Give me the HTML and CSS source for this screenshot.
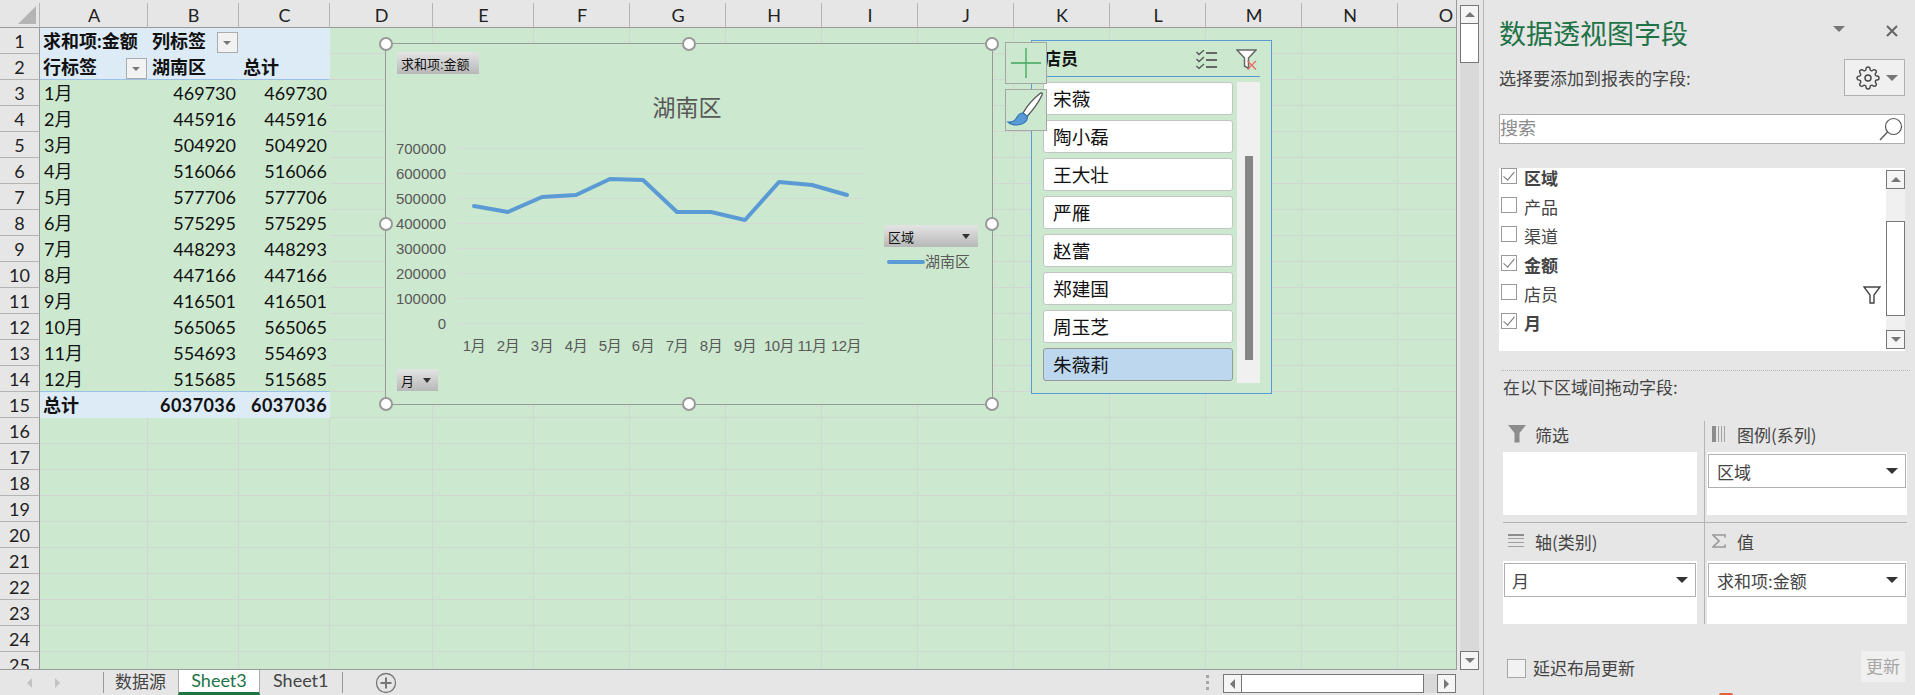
FILE: index.html
```html
<!DOCTYPE html>
<html>
<head>
    <title>数据透视图字段</title>
    <link rel="stylesheet" href="styles.css">
</head>
<body>
<div class="app">
    <div class="workbook">
        <div class="sheet-row">
            <div class="grid-wrap">
                <table class="grid">
                    <colgroup>
                        <col class="c-head"><col class="c-a"><col class="c-b"><col class="c-b">
                        <col class="c-d"><col class="c-e"><col class="c-n"><col class="c-n"><col class="c-n"><col class="c-n"><col class="c-n"><col class="c-n"><col class="c-n"><col class="c-n"><col class="c-n"><col class="c-n">
                    </colgroup>
                    <thead>
                        <tr>
                            <th class="corner"><span class="corner-tri"></span></th>
                            <th>A</th><th>B</th><th>C</th><th>D</th><th>E</th><th>F</th><th>G</th><th>H</th><th>I</th><th>J</th><th>K</th><th>L</th><th>M</th><th>N</th><th>O</th>
                        </tr>
                    </thead>
                    <tbody>
                        <tr class="pv-head"><th>1</th><td class="b">求和项:金额</td><td class="b flt">列标签<span class="dd"></span></td><td></td><td></td><td></td><td></td><td></td><td></td><td></td><td></td><td></td><td></td><td></td><td></td><td></td></tr>
                        <tr class="pv-head pv-last"><th>2</th><td class="b flt">行标签<span class="dd"></span></td><td class="b">湖南区</td><td class="b">总计</td><td></td><td></td><td></td><td></td><td></td><td></td><td></td><td></td><td></td><td></td><td></td><td></td></tr>
                        <tr class="pv"><th>3</th><td>1月</td><td class="r">469730</td><td class="r">469730</td><td></td><td></td><td></td><td></td><td></td><td></td><td></td><td></td><td></td><td></td><td></td><td></td></tr>
                        <tr class="pv"><th>4</th><td>2月</td><td class="r">445916</td><td class="r">445916</td><td></td><td></td><td></td><td></td><td></td><td></td><td></td><td></td><td></td><td></td><td></td><td></td></tr>
                        <tr class="pv"><th>5</th><td>3月</td><td class="r">504920</td><td class="r">504920</td><td></td><td></td><td></td><td></td><td></td><td></td><td></td><td></td><td></td><td></td><td></td><td></td></tr>
                        <tr class="pv"><th>6</th><td>4月</td><td class="r">516066</td><td class="r">516066</td><td></td><td></td><td></td><td></td><td></td><td></td><td></td><td></td><td></td><td></td><td></td><td></td></tr>
                        <tr class="pv"><th>7</th><td>5月</td><td class="r">577706</td><td class="r">577706</td><td></td><td></td><td></td><td></td><td></td><td></td><td></td><td></td><td></td><td></td><td></td><td></td></tr>
                        <tr class="pv"><th>8</th><td>6月</td><td class="r">575295</td><td class="r">575295</td><td></td><td></td><td></td><td></td><td></td><td></td><td></td><td></td><td></td><td></td><td></td><td></td></tr>
                        <tr class="pv"><th>9</th><td>7月</td><td class="r">448293</td><td class="r">448293</td><td></td><td></td><td></td><td></td><td></td><td></td><td></td><td></td><td></td><td></td><td></td><td></td></tr>
                        <tr class="pv"><th>10</th><td>8月</td><td class="r">447166</td><td class="r">447166</td><td></td><td></td><td></td><td></td><td></td><td></td><td></td><td></td><td></td><td></td><td></td><td></td></tr>
                        <tr class="pv"><th>11</th><td>9月</td><td class="r">416501</td><td class="r">416501</td><td></td><td></td><td></td><td></td><td></td><td></td><td></td><td></td><td></td><td></td><td></td><td></td></tr>
                        <tr class="pv"><th>12</th><td>10月</td><td class="r">565065</td><td class="r">565065</td><td></td><td></td><td></td><td></td><td></td><td></td><td></td><td></td><td></td><td></td><td></td><td></td></tr>
                        <tr class="pv"><th>13</th><td>11月</td><td class="r">554693</td><td class="r">554693</td><td></td><td></td><td></td><td></td><td></td><td></td><td></td><td></td><td></td><td></td><td></td><td></td></tr>
                        <tr class="pv pv-last"><th>14</th><td>12月</td><td class="r">515685</td><td class="r">515685</td><td></td><td></td><td></td><td></td><td></td><td></td><td></td><td></td><td></td><td></td><td></td><td></td></tr>
                        <tr class="pv-head"><th>15</th><td class="b">总计</td><td class="b r wide">6037036</td><td class="b r wide">6037036</td><td></td><td></td><td></td><td></td><td></td><td></td><td></td><td></td><td></td><td></td><td></td><td></td></tr>
                        <tr><th>16</th><td></td><td></td><td></td><td></td><td></td><td></td><td></td><td></td><td></td><td></td><td></td><td></td><td></td><td></td><td></td></tr>
                        <tr><th>17</th><td></td><td></td><td></td><td></td><td></td><td></td><td></td><td></td><td></td><td></td><td></td><td></td><td></td><td></td><td></td></tr>
                        <tr><th>18</th><td></td><td></td><td></td><td></td><td></td><td></td><td></td><td></td><td></td><td></td><td></td><td></td><td></td><td></td><td></td></tr>
                        <tr><th>19</th><td></td><td></td><td></td><td></td><td></td><td></td><td></td><td></td><td></td><td></td><td></td><td></td><td></td><td></td><td></td></tr>
                        <tr><th>20</th><td></td><td></td><td></td><td></td><td></td><td></td><td></td><td></td><td></td><td></td><td></td><td></td><td></td><td></td><td></td></tr>
                        <tr><th>21</th><td></td><td></td><td></td><td></td><td></td><td></td><td></td><td></td><td></td><td></td><td></td><td></td><td></td><td></td><td></td></tr>
                        <tr><th>22</th><td></td><td></td><td></td><td></td><td></td><td></td><td></td><td></td><td></td><td></td><td></td><td></td><td></td><td></td><td></td></tr>
                        <tr><th>23</th><td></td><td></td><td></td><td></td><td></td><td></td><td></td><td></td><td></td><td></td><td></td><td></td><td></td><td></td><td></td></tr>
                        <tr><th>24</th><td></td><td></td><td></td><td></td><td></td><td></td><td></td><td></td><td></td><td></td><td></td><td></td><td></td><td></td><td></td></tr>
                        <tr><th>25</th><td></td><td></td><td></td><td></td><td></td><td></td><td></td><td></td><td></td><td></td><td></td><td></td><td></td><td></td><td></td></tr>
                    </tbody>
                </table>

                <div class="chart">
                    <svg class="chart-svg" width="606" height="360" viewBox="386 44 606 360">
                        <g class="gridlines">
                            <line x1="458" x2="865" y1="148.5" y2="148.5"/>
                            <line x1="458" x2="865" y1="173.5" y2="173.5"/>
                            <line x1="458" x2="865" y1="198.5" y2="198.5"/>
                            <line x1="458" x2="865" y1="223.5" y2="223.5"/>
                            <line x1="458" x2="865" y1="248.5" y2="248.5"/>
                            <line x1="458" x2="865" y1="273.5" y2="273.5"/>
                            <line x1="458" x2="865" y1="298.5" y2="298.5"/>
                            <line x1="458" x2="865" y1="323.5" y2="323.5"/>
                        </g>
                        <polyline class="series" points="474,206 508,212 542,197 576,195 610,179 643,180 677,212 711,212 745,220 779,182 812,185 847,195"/>
                        <text class="chart-title" x="687" y="116">湖南区</text>
                        <g class="y-labels">
                            <text x="446" y="154">700000</text>
                            <text x="446" y="179">600000</text>
                            <text x="446" y="204">500000</text>
                            <text x="446" y="229">400000</text>
                            <text x="446" y="254">300000</text>
                            <text x="446" y="279">200000</text>
                            <text x="446" y="304">100000</text>
                            <text x="446" y="329">0</text>
                        </g>
                        <g class="x-labels">
                            <text x="474" y="351">1月</text>
                            <text x="508" y="351">2月</text>
                            <text x="542" y="351">3月</text>
                            <text x="576" y="351">4月</text>
                            <text x="610" y="351">5月</text>
                            <text x="643" y="351">6月</text>
                            <text x="677" y="351">7月</text>
                            <text x="711" y="351">8月</text>
                            <text x="745" y="351">9月</text>
                            <text x="779" y="351">10月</text>
                            <text x="812" y="351">11月</text>
                            <text x="846" y="351">12月</text>
                        </g>
                        <line class="series" x1="889" x2="923" y1="262" y2="262"/>
                        <text class="legend-text" x="925" y="267">湖南区</text>
                    </svg>
                    <div class="chart-btn btn-value">求和项:金额</div>
                    <div class="chart-btn btn-legend">区域<span class="tri"></span></div>
                    <div class="chart-btn btn-axis">月<span class="tri"></span></div>
                    <span class="handle h-tl"></span><span class="handle h-tc"></span><span class="handle h-tr"></span>
                    <span class="handle h-ml"></span><span class="handle h-mr"></span>
                    <span class="handle h-bl"></span><span class="handle h-bc"></span><span class="handle h-br"></span>
                </div>

                <div class="slicer">
                    <div class="slicer-head">
                        <span class="slicer-title">店员</span>
                        <svg class="slicer-ico" width="21" height="19" viewBox="0 0 21 19">
                            <path d="M.5 2l2.500 2.500L8 0M.5 9l2.500 2.500L8 7M.5 16l2.500 2.500L8 14" fill="none" stroke="#555" stroke-width="1.300"/>
                            <path d="M10 3h11M10 10h11M10 17h11" stroke="#666" stroke-width="2"/>
                        </svg>
                        <svg class="slicer-clear" width="21" height="21" viewBox="0 0 21 21">
                            <path d="M1 1h19l-7.500 8v10.500l-4-2.500V9z" fill="#fff" stroke="#666" stroke-width="1.500"/>
                            <path d="M11.500 12l8.500 8.500M20 12l-8.500 8.500" stroke="#ee6a64" stroke-width="1.300"/>
                        </svg>
                    </div>
                    <div class="slicer-body">
                        <ul class="slicer-list">
                            <li>宋薇</li>
                            <li>陶小磊</li>
                            <li>王大壮</li>
                            <li>严雁</li>
                            <li>赵蕾</li>
                            <li>郑建国</li>
                            <li>周玉芝</li>
                            <li class="selected">朱薇莉</li>
                        </ul>
                        <div class="slicer-scroll"><span class="slicer-thumb"></span></div>
                    </div>
                </div>

                <div class="side-btn btn-plus">
                    <svg width="32" height="32" viewBox="0 0 32 32"><path d="M16 1v30M1 16h30" stroke="#3fa75c" stroke-width="1.300"/></svg>
                </div>
                <div class="side-btn btn-brush">
                    <svg width="40" height="40" viewBox="0 0 40 40">
                        <path d="M36 5c1-2-.5-2.500-2-1.500C27 9 21 16 17 23l4 3.500C27 20 32.500 12.500 36 5z" fill="#fff" stroke="#555" stroke-width="1.300"/>
                        <path d="M17 23l4.500 3.500c0 5-4.500 8.500-10.500 8.500-3.500 0-7-1-9-3 4 .5 6.500-1 8.500-4 1.500-3 3.500-5 6.500-5z" fill="#5b9bd5" stroke="#2e75b6" stroke-width="1.100"/>
                    </svg>
                </div>
            </div>

            <div class="vscroll">
                <span class="sb-btn"><span class="up"></span></span>
                <span class="vthumb"></span>
                <span class="sb-btn sb-end"><span class="down"></span></span>
            </div>
        </div>

        <div class="tabbar">
            <span class="nav-arrow left"></span>
            <span class="nav-arrow right"></span>
            <span class="tab-sep"></span>
            <span class="tab tab-cjk">数据源</span>
            <span class="tab active">Sheet3</span>
            <span class="tab">Sheet1</span>
            <span class="tab-sep last"></span>
            <span class="add-sheet">
                <svg width="22" height="22" viewBox="0 0 22 22"><circle cx="11" cy="11" r="9.500" fill="none" stroke="#777" stroke-width="1.300"/><path d="M11 5.500v11M5.500 11h11" stroke="#777" stroke-width="2"/></svg>
            </span>
            <span class="dots"><i></i><i></i><i></i></span>
            <div class="hscroll">
                <span class="sb-btn"><span class="lt"></span></span>
                <span class="hthumb"></span>
                <span class="sb-btn sb-end"><span class="rt"></span></span>
            </div>
        </div>
    </div>

    <aside class="panel">
        <div class="panel-head">
            <span class="panel-title">数据透视图字段</span>
            <span class="head-arrow"></span>
            <svg class="head-close" width="14" height="14" viewBox="0 0 14 14"><path d="M2 2l10 10M12 2L2 12" stroke="#666" stroke-width="2"/></svg>
        </div>
        <div class="pick-row">
            <span>选择要添加到报表的字段:</span>
            <div class="gear-btn">
                <svg width="24" height="24" viewBox="0 0 24 24">
                    <circle cx="12" cy="12" r="3" fill="none" stroke="#444" stroke-width="1.400"/>
                    <path d="M19.400 15a1.650 1.650 0 0 0 .33 1.820l.06.06a2 2 0 0 1 0 2.830 2 2 0 0 1-2.830 0l-.06-.06a1.650 1.650 0 0 0-1.820-.33 1.650 1.650 0 0 0-1 1.510V21a2 2 0 0 1-2 2 2 2 0 0 1-2-2v-.09A1.650 1.650 0 0 0 9 19.400a1.650 1.650 0 0 0-1.820.33l-.06.06a2 2 0 0 1-2.830 0 2 2 0 0 1 0-2.830l.06-.06a1.650 1.650 0 0 0 .33-1.820 1.650 1.650 0 0 0-1.510-1H3a2 2 0 0 1-2-2 2 2 0 0 1 2-2h.09A1.650 1.650 0 0 0 4.600 9a1.650 1.650 0 0 0-.33-1.820l-.06-.06a2 2 0 0 1 0-2.830 2 2 0 0 1 2.830 0l.06.06a1.650 1.650 0 0 0 1.820.33H9a1.650 1.650 0 0 0 1-1.510V3a2 2 0 0 1 2-2 2 2 0 0 1 2 2v.09a1.650 1.650 0 0 0 1 1.510 1.650 1.650 0 0 0 1.820-.33l.06-.06a2 2 0 0 1 2.830 0 2 2 0 0 1 0 2.830l-.06.06a1.650 1.650 0 0 0-.33 1.820V9a1.650 1.650 0 0 0 1.510 1H21a2 2 0 0 1 2 2 2 2 0 0 1-2 2h-.09a1.650 1.650 0 0 0-1.510 1z" fill="none" stroke="#444" stroke-width="1.400"/>
                </svg>
                <span class="head-arrow small"></span>
            </div>
        </div>
        <div class="search">
            <span class="search-text">搜索</span>
            <svg width="24" height="24" viewBox="0 0 24 24"><circle cx="14.500" cy="9.500" r="8" fill="none" stroke="#555" stroke-width="1.200"/><path d="M8.500 15L1 23" stroke="#555" stroke-width="1.300"/></svg>
        </div>
        <div class="field-list">
            <ul>
                <li class="on"><span class="check is-on"></span><span class="fname">区域</span></li>
                <li><span class="check"></span><span class="fname">产品</span></li>
                <li><span class="check"></span><span class="fname">渠道</span></li>
                <li class="on"><span class="check is-on"></span><span class="fname">金额</span></li>
                <li><span class="check"></span><span class="fname">店员</span>
                    <svg class="field-filter" width="18" height="18" viewBox="0 0 18 18"><path d="M1 1h16l-6 8v8H7V9z" fill="#fff" stroke="#444" stroke-width="1.400"/></svg>
                </li>
                <li class="on"><span class="check is-on"></span><span class="fname">月</span></li>
            </ul>
            <div class="list-scroll">
                <span class="sb-btn"><span class="up"></span></span>
                <span class="list-thumb"></span>
                <span class="sb-btn sb-end"><span class="down"></span></span>
            </div>
        </div>
        <div class="dotted"></div>
        <div class="drag-label">在以下区域间拖动字段:</div>
        <div class="areas">
            <div class="area a-tl">
                <div class="area-head">
                    <span class="ico-slot"><svg width="18" height="18" viewBox="0 0 18 18"><path d="M0 0h18l-6.500 8v9.500h-5V8z" fill="#8c8c8c"/></svg></span>
                    <span>筛选</span>
                </div>
                <div class="area-box"></div>
            </div>
            <div class="area a-tr">
                <div class="area-head">
                    <span class="ico-slot"><svg width="14" height="16" viewBox="0 0 14 16"><path d="M0 0h4v16H0z" fill="#8c8c8c"/><path d="M6 0h1v16H6zM9 0h1v16H9zM12 0h1v16h-1z" fill="#a0a0a0"/></svg></span>
                    <span>图例(系列)</span>
                </div>
                <div class="area-box"><div class="pill">区域<span class="tri big"></span></div></div>
            </div>
            <div class="area a-bl">
                <div class="area-head">
                    <span class="ico-slot"><svg width="16" height="14" viewBox="0 0 16 14"><path d="M0 0h16v2H0z" fill="#8c8c8c"/><path d="M0 4h16v1H0zM0 8h16v1H0zM0 12h16v1H0z" fill="#a0a0a0"/></svg></span>
                    <span>轴(类别)</span>
                </div>
                <div class="area-box"><div class="pill">月<span class="tri big"></span></div></div>
            </div>
            <div class="area a-br">
                <div class="area-head">
                    <span class="ico-slot"><svg width="14" height="14" viewBox="0 0 14 14"><path d="M13 3.500V1H1l6 6-6 6h12v-2.500" fill="none" stroke="#999" stroke-width="1.600"/></svg></span>
                    <span>值</span>
                </div>
                <div class="area-box"><div class="pill">求和项:金额<span class="tri big"></span></div></div>
            </div>
        </div>
        <div class="panel-foot">
            <span class="defer-box"></span>
            <span class="defer-text">延迟布局更新</span>
            <span class="update-btn">更新</span>
        </div>
        <span class="cursor-bit"></span>
    </aside>
</div>
</body>
</html>
```

FILE: styles.css
```css
* {
    box-sizing: border-box;
}

html, body {
    margin: 0;
    height: 100%;
    overflow: hidden;
}

body {
    background-color: #e6e6e6;
    font-family: "Lato", "Noto Sans CJK SC", sans-serif;
    color: #111111;
}

ul {
    list-style-type: none;
    margin: 0;
    padding: 0;
}

.app {
    display: flex;
    width: 1915px;
    height: 695px;
}

.workbook {
    width: 1483px;
    flex: none;
}

.sheet-row {
    display: flex;
    height: 670px;
}

/* grid */
.grid-wrap {
    position: relative;
    width: 1457px;
    height: 670px;
    padding-top: 3px;
    overflow: hidden;
    border-right: 1px solid #9a9a9a;
    border-bottom: 1px solid #9a9a9a;
}

.grid {
    border-collapse: separate;
    border-spacing: 0;
    table-layout: fixed;
    width: 1494px;
    font-size: 18px;
}

.c-head { width: 40px; }
.c-a { width: 108px; }
.c-b { width: 91px; }
.c-d { width: 103px; }
.c-e { width: 101px; }
.c-n { width: 96px; }

.grid th {
    padding: 0;
    font-weight: 400;
    text-align: center;
    background-color: #e6e6e6;
    color: #222222;
}

.grid thead th {
    height: 25px;
    line-height: 24px;
    padding-left: 1px;
    border-right: 1px solid #b4b4b4;
    border-bottom: 1px solid #9a9a9a;
}

.grid tbody th {
    height: 26px;
    padding-top: 2px;
    line-height: 23px;
    border-right: 1px solid #9a9a9a;
    border-bottom: 1px solid #b4b4b4;
}

.grid td {
    height: 26px;
    line-height: 23px;
    padding: 2px 2px 0 4px;
    overflow: hidden;
    white-space: nowrap;
    background-color: #cce8cf;
    border-right: 1px solid #d2d6d2;
    border-bottom: 1px solid #d2d6d2;
}

.grid td.b { font-weight: 700; padding-left: 3px; }
.grid td.b + td.b { padding-left: 4px; }
.grid td.r { text-align: right; }
.grid td.flt { padding-right: 0; }
.grid td.wide { letter-spacing: 0.4px; }

.corner {
    position: relative;
}

.corner-tri {
    position: absolute;
    right: 3px;
    bottom: 3px;
    width: 0;
    height: 0;
    border-left: 18px solid transparent;
    border-bottom: 18px solid #b4b4b4;
}

.pv td:nth-child(2), .pv td:nth-child(3), .pv td:nth-child(4) {
    border-color: #cce8cf;
}

.pv-head td:nth-child(2), .pv-head td:nth-child(3), .pv-head td:nth-child(4) {
    background-color: #ddebf7;
    border-color: #ddebf7;
}

.pv-last td:nth-child(2), .pv-last td:nth-child(3), .pv-last td:nth-child(4) {
    border-bottom-color: #9bc2e6;
}

.dd {
    float: right;
    position: relative;
    width: 21px;
    height: 21px;
    margin-top: 2px;
    background-color: #f2f2f2;
    border: 1px solid #ababab;
}

.dd::after {
    content: "";
    position: absolute;
    left: 5px;
    top: 8px;
    border-left: 4px solid transparent;
    border-right: 4px solid transparent;
    border-top: 4px solid #777777;
}

/* chart */
.chart {
    position: absolute;
    left: 385px;
    top: 43px;
    width: 608px;
    height: 362px;
    background-color: #cce8cf;
    border: 1px solid #999999;
}

.chart-svg {
    display: block;
    font-family: "Liberation Sans", "Noto Sans CJK SC", sans-serif;
}

.gridlines line {
    stroke: #d6d9d6;
    stroke-width: 1;
}

.series {
    fill: none;
    stroke: #5b9bd5;
    stroke-width: 4;
    stroke-linecap: round;
    stroke-linejoin: round;
}

.chart-title {
    font-size: 23px;
    fill: #595959;
    text-anchor: middle;
}

.y-labels text {
    font-size: 15px;
    fill: #595959;
    text-anchor: end;
}

.x-labels text {
    font-size: 15px;
    fill: #595959;
    text-anchor: middle;
    letter-spacing: -0.5px;
}

.legend-text {
    font-size: 15px;
    fill: #595959;
}

.chart-btn {
    position: absolute;
    display: flex;
    align-items: center;
    justify-content: space-between;
    height: 22px;
    padding: 0 4px;
    font-family: "Liberation Sans", "Noto Sans CJK SC", sans-serif;
    font-size: 13px;
    color: #111111;
    background: linear-gradient(#e4e4e4, #b8b8b8);
}

.btn-value { left: 11px; top: 8px; width: 82px; }
.btn-legend { left: 498px; top: 181px; width: 94px; }
.btn-axis { left: 11px; top: 325px; width: 41px; }

.tri {
    width: 0;
    height: 0;
    margin-right: 4px;
    border-left: 4px solid transparent;
    border-right: 4px solid transparent;
    border-top: 5px solid #333333;
}

.tri.big {
    margin-right: 7px;
    border-left-width: 6px;
    border-right-width: 6px;
    border-top-width: 6px;
}

.btn-axis .tri {
    margin-right: 3px;
}

.handle {
    position: absolute;
    width: 14px;
    height: 14px;
    background-color: #ffffff;
    border: 2px solid #999999;
    border-radius: 50%;
}

.h-tl { left: -7px; top: -7px; }
.h-tc { left: 296px; top: -7px; }
.h-tr { right: -7px; top: -7px; }
.h-ml { left: -7px; top: 173px; }
.h-mr { right: -7px; top: 173px; }
.h-bl { left: -7px; bottom: -7px; }
.h-bc { left: 296px; bottom: -7px; }
.h-br { right: -7px; bottom: -7px; }

/* slicer */
.slicer {
    position: absolute;
    left: 1031px;
    top: 40px;
    width: 241px;
    height: 354px;
    padding: 0 11px 0 11px;
    background-color: #cce8cf;
    border: 1px solid #5b9bd5;
}

.slicer-head {
    display: flex;
    align-items: center;
    height: 36px;
    border-bottom: 1px solid #5b9bd5;
}

.slicer-title {
    flex: 1;
    margin-left: 1px;
    font-size: 17px;
    font-weight: 700;
    line-height: 34px;
    height: 34px;
}

.slicer-ico {
    margin: 1px 19px 0 0;
}

.slicer-clear {
    margin: 2px 3px 0 0;
}

.slicer-body {
    display: flex;
    justify-content: space-between;
    padding-top: 5px;
}

.slicer-list {
    width: 190px;
}

.slicer-list li {
    height: 33px;
    margin-bottom: 5px;
    padding-left: 9px;
    font-size: 18.67px;
    line-height: 32px;
    background-color: #ffffff;
    border: 1px solid #c4c4c4;
    border-radius: 3px;
}

.slicer-list li.selected {
    background-color: #bdd7ee;
    border-color: #999999;
}

.slicer-scroll {
    width: 23px;
    height: 301px;
    background-color: #f0f0f0;
    padding: 74px 7px 0 8px;
}

.slicer-thumb {
    display: block;
    height: 204px;
    background-color: #868686;
}

.side-btn {
    position: absolute;
    left: 1005px;
    width: 42px;
    height: 42px;
    display: flex;
    align-items: center;
    justify-content: center;
    background-color: #cce8cf;
    border: 1px solid #a6a6a6;
}

.btn-plus { top: 42px; }
.btn-brush { top: 89px; }

/* scrollbars */
.sb-btn {
    display: flex;
    align-items: center;
    justify-content: center;
    flex: none;
    width: 19px;
    height: 19px;
    background-color: #f5f5f5;
    border: 1px solid #777777;
}

.up, .down, .lt, .rt {
    width: 0;
    height: 0;
}

.up {
    border-left: 5px solid transparent;
    border-right: 5px solid transparent;
    border-bottom: 5px solid #777777;
}

.down {
    border-left: 5px solid transparent;
    border-right: 5px solid transparent;
    border-top: 5px solid #777777;
}

.lt {
    border-top: 5px solid transparent;
    border-bottom: 5px solid transparent;
    border-right: 5px solid #777777;
}

.rt {
    border-top: 5px solid transparent;
    border-bottom: 5px solid transparent;
    border-left: 5px solid #777777;
}

.vscroll {
    display: flex;
    flex-direction: column;
    width: 19px;
    height: 665px;
    margin: 5px 0 0 3px;
    background-color: #d9d9d9;
}

.vthumb {
    display: block;
    height: 39px;
    background-color: #ffffff;
    border: 1px solid #777777;
    border-top: 0;
}

.sb-end {
    margin-top: auto;
}

/* tabs */
.tabbar {
    display: flex;
    align-items: stretch;
    width: 1457px;
    height: 25px;
    font-size: 18px;
    color: #444444;
}

.nav-arrow {
    align-self: center;
    width: 0;
    height: 0;
    border-top: 5px solid transparent;
    border-bottom: 5px solid transparent;
}

.nav-arrow.left {
    margin-left: 27px;
    border-right: 5px solid #c2c2c2;
}

.nav-arrow.right {
    margin-left: 23px;
    border-left: 5px solid #c2c2c2;
}

.tab-sep {
    align-self: center;
    width: 1px;
    height: 21px;
    margin-left: 43px;
    background-color: #999999;
}

.tab-sep.last {
    margin-left: 0;
}

.tab {
    display: flex;
    align-items: center;
    padding: 0 13px 5px;
    white-space: nowrap;
}

.tab-cjk {
    padding: 0 12px 5px 11px;
    font-size: 17px;
}

.tab.active {
    justify-content: center;
    width: 82px;
    padding: 0 0 2px;
    background-color: #ffffff;
    color: #217346;
    border-left: 1px solid #aaaaaa;
    border-right: 1px solid #aaaaaa;
    border-bottom: 3px solid #217346;
}

.add-sheet {
    display: flex;
    align-items: center;
    margin-left: 32px;
}

.dots {
    display: flex;
    flex-direction: column;
    justify-content: center;
    gap: 3px;
    width: 3px;
    margin-left: auto;
    margin-right: 14px;
}

.dots i {
    display: block;
    width: 3px;
    height: 3px;
    background-color: #a6a6a6;
}

.hscroll {
    display: flex;
    width: 233px;
    height: 19px;
    margin-top: 4px;
    margin-right: 1px;
    background-color: #d9d9d9;
}

.hthumb {
    display: block;
    width: 182px;
    background-color: #ffffff;
    border: 1px solid #777777;
    border-left: 0;
}

.hscroll .sb-end {
    margin-left: auto;
}

/* field panel */
.panel {
    position: relative;
    width: 432px;
    padding: 0 10px 0 15px;
    font-size: 17px;
    color: #444444;
    font-family: "Noto Sans CJK SC", sans-serif;
    border-left: 1px solid #b4b4b4;
}

.panel-head {
    display: flex;
    align-items: flex-start;
    height: 59px;
    padding-top: 13px;
}

.panel-title {
    flex: 1;
    font-size: 27px;
    line-height: 40px;
    color: #217346;
}

.head-arrow {
    width: 0;
    height: 0;
    margin: 13px 40px 0 0;
    border-left: 6px solid transparent;
    border-right: 6px solid transparent;
    border-top: 6px solid #777777;
}

.head-arrow.small {
    margin: 0;
}

.head-close {
    margin: 11px 6px 0 0;
}

.pick-row {
    display: flex;
    align-items: center;
    justify-content: space-between;
    height: 37px;
}

.gear-btn {
    display: flex;
    align-items: center;
    justify-content: space-between;
    width: 61px;
    height: 37px;
    padding: 0 6px 0 11px;
    background-color: #f0f0f0;
    border: 1px solid #b0b0b0;
}

.search {
    display: flex;
    align-items: center;
    justify-content: space-between;
    height: 30px;
    margin-top: 18px;
    padding: 0 1px 0 0;
    font-size: 18px;
    color: #8a8a8a;
    background-color: #ffffff;
    border: 1px solid #adadad;
}

.search-text {
    line-height: 22px;
    height: 26px;
}

.field-list {
    display: flex;
    height: 183px;
    margin-top: 24px;
    overflow: hidden;
    background-color: #ffffff;
}

.field-list ul {
    width: 387px;
    margin-top: -7px;
}

.field-list li {
    display: flex;
    align-items: center;
    height: 29px;
    padding-left: 2px;
}

.field-list li.on {
    font-weight: 700;
}

.check {
    position: relative;
    flex: none;
    width: 16px;
    height: 16px;
    background-color: #ffffff;
    border: 1px solid #9a9a9a;
}

.check.is-on::after {
    content: "";
    position: absolute;
    left: 4px;
    top: 0;
    width: 5px;
    height: 10px;
    border-right: 1.500px solid #777777;
    border-bottom: 1.500px solid #777777;
    transform: rotate(40deg);
}

.fname {
    margin-left: 7px;
    padding-top: 4px;
    line-height: 23px;
}

.field-filter {
    margin: 6px 5px 0 auto;
}

.list-scroll {
    display: flex;
    flex-direction: column;
    flex: none;
    width: 19px;
    margin: 2px 0;
    background-color: #f0f0f0;
}

.list-thumb {
    display: block;
    height: 95px;
    margin-top: 32px;
    background-color: #ffffff;
    border: 1px solid #777777;
}

.dotted {
    height: 1px;
    margin: 19px -5px 0 2px;
    border-top: 1px dotted #b4b4b4;
}

.drag-label {
    height: 33px;
    line-height: 31px;
    padding-left: 4px;
}

.areas {
    display: grid;
    grid-template-columns: 202px 202px;
    margin: 17px -1px 0 4px;
}

.a-tl, .a-bl {
    border-right: 1px solid #b4b4b4;
}

.a-tl, .a-tr {
    border-bottom: 1px solid #b4b4b4;
    height: 102px;
}

.a-tl .area-head, .a-tr .area-head {
    height: 31px;
    padding-bottom: 5px;
}

.a-bl .area-head, .a-br .area-head {
    height: 38px;
    padding-bottom: 2px;
}

.area-head {
    display: flex;
    align-items: center;
    padding-left: 5px;
}

.a-tr .area-head, .a-br .area-head {
    padding-left: 7px;
}

.ico-slot {
    display: flex;
    align-items: center;
    width: 27px;
    flex: none;
}

.a-tr .ico-slot, .a-br .ico-slot {
    width: 25px;
}

.area-box {
    width: 194px;
    height: 63px;
    padding: 2px 1px;
    background-color: #ffffff;
}

.a-tr .area-box, .a-br .area-box {
    width: 200px;
    margin-left: 2px;
}

.pill {
    display: flex;
    align-items: center;
    justify-content: space-between;
    height: 34px;
    padding-left: 9px;
    background-color: #ffffff;
    border: 1px solid #b0b0b0;
}

.a-bl .pill {
    padding-left: 7px;
}

.a-br .pill, .a-tr .pill {
    padding-left: 8px;
}

.panel-foot {
    display: flex;
    margin-top: 27px;
    height: 31px;
}

.defer-box {
    width: 19px;
    height: 19px;
    margin: 8px 0 0 8px;
    background-color: #f2f2f2;
    border: 1px solid #a6a6a6;
}

.defer-text {
    flex: 1;
    margin-left: 7px;
    padding-top: 3px;
    line-height: 27px;
}

.update-btn {
    width: 44px;
    line-height: 29px;
    text-align: center;
    color: #a6a6a6;
    background-color: #f0f0f0;
}

.cursor-bit {
    position: absolute;
    left: 235px;
    bottom: 0;
    width: 14px;
    height: 2px;
    background-color: #e8603a;
    border-radius: 6px 6px 0 0;
}
```
